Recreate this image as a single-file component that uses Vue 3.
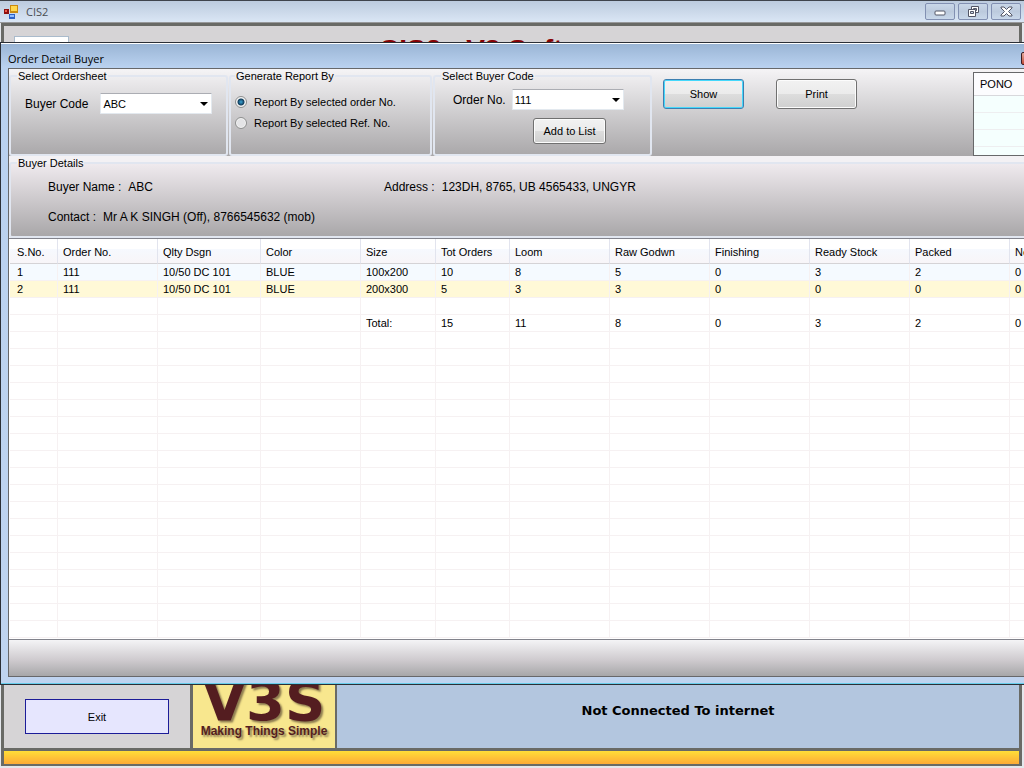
<template>
  <div class="app">
    <header class="titlebar">
      <svg class="app-icon" viewBox="0 0 14 14" width="14" height="14" aria-hidden="true">
        <rect x="6" y="0" width="8" height="8" fill="#c98a10" />
        <rect x="7" y="1" width="6" height="5" fill="#ffd84d" />
        <rect x="0" y="4" width="5" height="5" fill="#8e1010" />
        <rect x="1" y="5" width="2" height="2" fill="#ee5a4a" />
        <rect x="5" y="9" width="6" height="5" fill="#2f62c4" />
        <rect x="6" y="10" width="4" height="2" fill="#8fbcff" />
      </svg>
      <span class="app-name">CIS2</span>
      <div class="win-buttons">
        <button type="button" aria-label="Minimize">
          <svg viewBox="0 0 13 11" width="13" height="11">
            <rect x="1" y="5" width="10" height="4" rx="1" fill="#fff" stroke="#535666" />
          </svg>
        </button>
        <button type="button" aria-label="Restore">
          <svg viewBox="0 0 13 11" width="13" height="11">
            <path d="M4.500 0.500h7v6h-7z" fill="#fff" stroke="#535666" />
            <path d="M6.500 2.500h3v2h-3z" fill="#c9d7e8" stroke="#535666" />
            <path d="M1.500 3.500h7v7h-7z" fill="#fff" stroke="#535666" />
            <path d="M3.500 5.500h3v2h-3z" fill="#c9d7e8" stroke="#535666" />
          </svg>
        </button>
        <button type="button" aria-label="Close">
          <svg viewBox="0 0 13 11" width="13" height="11">
            <path d="M1 1h3l2.500 2.500L9 1h3v1L8.500 5.500 12 9v1H9L6.500 7.500 4 10H1V9l3.500-3.500L1 2z" fill="#fff" stroke="#535666" />
          </svg>
        </button>
      </div>
    </header>

    <main class="desktop">
      <section class="banner">
        <input class="banner-input" type="text" aria-label="Search" />
        <h1>CIS2 - V3 Soft</h1>
      </section>

      <footer class="status">
        <div class="status-exit">
          <button type="button" class="exit">Exit</button>
        </div>
        <div class="logo">
          <span class="logo-mark">V3S</span>
          <span class="logo-text">Making Things Simple</span>
        </div>
        <p class="connection">Not Connected To internet</p>
      </footer>
      <div class="strip"></div>
    </main>

    <!-- Child window floating over the main form -->
    <section class="child">
      <header class="child-title">
        <h2>Order Detail Buyer</h2>
        <button type="button" class="child-close" aria-label="Close order detail"></button>
      </header>

      <div class="child-body">
        <div class="filters">
          <fieldset class="group">
            <legend>Select Ordersheet</legend>
            <div class="field field-buyer">
              <label for="buyer">Buyer Code</label>
              <span class="combo">
                <select id="buyer" v-model="buyer">
                  <option>ABC</option>
                </select>
              </span>
            </div>
          </fieldset>

          <fieldset class="group group-report">
            <legend>Generate Report By</legend>
            <label v-for="option in reportOptions" :key="option.value" class="radio">
              <input v-model="reportBy" type="radio" name="report" :value="option.value" />
              {{ option.label }}
            </label>
          </fieldset>

          <fieldset class="group">
            <legend>Select Buyer Code</legend>
            <div class="field field-order">
              <label for="order">Order No.</label>
              <span class="combo">
                <select id="order" v-model="orderNo">
                  <option>111</option>
                </select>
              </span>
            </div>
            <button type="button" class="btn btn-add">Add to List</button>
          </fieldset>

          <div class="actions">
            <button type="button" class="btn btn-default">Show</button>
            <button type="button" class="btn">Print</button>
          </div>

          <div class="pono">
            <table>
              <thead>
                <tr><th>PONO</th></tr>
              </thead>
              <tbody>
                <tr v-for="n in 4" :key="n"><td></td></tr>
              </tbody>
            </table>
          </div>
        </div>

        <fieldset class="group details">
          <legend>Buyer Details</legend>
          <dl>
            <div><dt>Buyer Name :</dt><dd>ABC</dd></div>
            <div><dt>Address :</dt><dd>123DH, 8765, UB 4565433, UNGYR</dd></div>
            <div><dt>Contact :</dt><dd>Mr A K SINGH (Off), 8766545632 (mob)</dd></div>
          </dl>
        </fieldset>

        <div class="grid">
          <table class="orders">
            <colgroup>
              <col v-for="col in columns" :key="col.label" :style="{ width: col.width + 'px' }" />
            </colgroup>
            <thead>
              <tr>
                <th v-for="col in columns" :key="col.label">{{ col.label }}</th>
              </tr>
            </thead>
            <tbody>
              <tr v-for="(row, i) in rows" :key="i">
                <td v-for="(cell, j) in row" :key="j">{{ cell }}</td>
              </tr>
            </tbody>
          </table>
        </div>

        <div class="child-footer"></div>
      </div>
    </section>
  </div>
</template>

<script setup>
import { ref } from 'vue'

const buyer = ref('ABC')
const orderNo = ref('111')
const reportBy = ref('order')

const reportOptions = [
  { value: 'order', label: 'Report By selected order No.' },
  { value: 'ref', label: 'Report By selected Ref. No.' }
]

const columns = [
  { label: 'S.No.', width: 48 },
  { label: 'Order No.', width: 100 },
  { label: 'Qlty Dsgn', width: 103 },
  { label: 'Color', width: 100 },
  { label: 'Size', width: 75 },
  { label: 'Tot Orders', width: 74 },
  { label: 'Loom', width: 100 },
  { label: 'Raw Godwn', width: 100 },
  { label: 'Finishing', width: 100 },
  { label: 'Ready Stock', width: 100 },
  { label: 'Packed', width: 100 },
  { label: 'Net', width: 100 }
]

const ROW_COUNT = 22
const blank = columns.map(() => '')

const data = [
  ['1', '111', '10/50 DC 101', 'BLUE', '100x200', '10', '8', '5', '0', '3', '2', '0'],
  ['2', '111', '10/50 DC 101', 'BLUE', '200x300', '5', '3', '3', '0', '0', '0', '0'],
  blank,
  ['', '', '', '', 'Total:', '15', '11', '8', '0', '3', '2', '0']
]

// the list always shows its full set of grid lines
const rows = [...data, ...Array(ROW_COUNT - data.length).fill(blank)]
</script>

<style>
body {
  margin: 0;
}
</style>

<style scoped>
.app {
  position: relative;
  display: flex;
  flex-direction: column;
  box-sizing: border-box;
  height: 100vh;
  overflow: hidden;
  border-top: 1px solid #3f444c;
  padding: 0 2px 2px 1px;
  background: #e4e7ec;
  color: #000;
  font-family: "Liberation Sans", Arial, sans-serif;
  font-size: 11px;
}

button,
input,
select {
  font: inherit;
  color: inherit;
}

.titlebar {
  display: flex;
  align-items: center;
  height: 21px;
  margin: 0 -2px 0 -1px;
  padding: 0 3px 0 4px;
  background: linear-gradient(#bccbde, #dae6f5);
  border-bottom: 1px solid #98999b;
}

.app-name {
  margin-left: 8px;
  color: #4a4d52;
  font-family: "Open Sans", "Noto Sans", sans-serif;
  font-size: 11px;
}

.win-buttons {
  display: flex;
  gap: 3px;
  margin-left: auto;
}

.win-buttons button {
  display: flex;
  align-items: center;
  justify-content: center;
  width: 30px;
  height: 17px;
  padding: 0;
  border: 1px solid #8290b2;
  border-radius: 2px;
  background: linear-gradient(#c9d7e8, #bccadd 50%, #c9d8ea);
}

.desktop {
  flex: 1;
  display: flex;
  flex-direction: column;
  border: 3px solid #696a66;
  border-bottom-width: 2px;
}

.banner {
  flex: 1;
  display: flex;
  align-items: flex-start;
  padding: 8px 10px;
  background: #d6d4d6;
}

.banner h1 {
  margin: 0 0 0 310px;
  color: #860204;
  font-size: 28px;
  line-height: 32px;
}

.banner-input {
  box-sizing: border-box;
  width: 55px;
  height: 20px;
  margin-top: 2px;
  border: 1px solid #abc;
  background: #fff;
}

.status {
  display: flex;
  height: 63px;
  border-bottom: 3px solid #696a66;
}

.status-exit {
  display: flex;
  width: 186px;
  align-items: center;
  justify-content: center;
  background: #d6d4d6;
}

.exit {
  width: 144px;
  height: 35px;
  border: 1px solid #1c1c98;
  background: #e6e6fe;
}

.logo {
  display: flex;
  flex-direction: column;
  align-items: center;
  justify-content: flex-end;
  width: 142px;
  overflow: hidden;
  border: solid #696a66;
  border-width: 0 2px 0 3px;
  background: #f8e78e;
  color: #541d20;
  text-shadow: 2px 2px 2px #8d7c50;
}

.logo-mark {
  font-family: "DejaVu Sans", sans-serif;
  font-size: 56px;
  font-weight: bold;
  line-height: 44px;
}

.logo-text {
  padding-bottom: 9px;
  font-family: "Liberation Sans Narrow", "Liberation Sans", sans-serif;
  font-size: 12px;
  font-weight: bold;
  line-height: 16px;
  white-space: nowrap;
}

.connection {
  flex: 1;
  margin: 0;
  padding-top: 15px;
  background: #b3c6df;
  font-family: "DejaVu Sans", sans-serif;
  font-size: 13px;
  font-weight: bold;
  line-height: 22px;
  text-align: center;
}

.strip {
  height: 13px;
  background: linear-gradient(#ffde38, #fdaa36);
}

/* Child window */
.child {
  position: absolute;
  top: 41px;
  left: 0;
  right: -20px;
  border: 1px solid #2b2f36;
  background: linear-gradient(#99b4d4, #b9d1ef 24px, #bfd4f0);
  padding: 1px 7px 7px;
  box-shadow: inset 0 1px #fff, inset 0 -1px #66cdeb;
}

.child-title {
  display: flex;
  align-items: center;
  justify-content: space-between;
  height: 24px;
}

.child-title h2 {
  margin: 6px 0 0;
  font-family: "Open Sans", "Noto Sans", sans-serif;
  font-size: 11px;
  font-weight: normal;
  line-height: 16px;
}

.child-close {
  width: 15px;
  height: 13px;
  margin-top: 4px;
  padding: 0;
  border: 1px solid #3c1c25;
  border-radius: 2px;
  background: linear-gradient(#e4aa9b, #bf4b37);
}

.child-body {
  border: 1px solid #67686a;
  background: #f3f1f4;
}

.filters {
  display: flex;
  align-items: flex-start;
  height: 87px;
  background: linear-gradient(#f5f4f6, #a9a7a9);
}

.group {
  box-sizing: border-box;
  width: 219px;
  min-width: 0;
  height: 87px;
  margin: 0 1px 0 0;
  padding: 0 6px;
  border: 2px solid #e1e6f0;
  border-radius: 3px;
}

.group-report {
  width: 203px;
  padding: 0 4px;
}

.group legend {
  padding: 0 1px;
  line-height: 14px;
}

.field {
  display: flex;
  align-items: center;
  font-size: 12px;
}

.field-buyer {
  gap: 12px;
  padding: 10px 0 0 8px;
}

.field-order {
  gap: 6px;
  padding: 6px 0 0 12px;
}

.combo {
  position: relative;
  display: flex;
}

.combo::after {
  position: absolute;
  top: 9px;
  right: 4px;
  border: 4px solid transparent;
  border-top-color: #000;
  border-bottom: 0;
  content: "";
  pointer-events: none;
}

.combo select {
  box-sizing: border-box;
  width: 112px;
  height: 21px;
  padding: 0 2px;
  border: 1px solid #e3e9ef;
  border-top-color: #abadb3;
  border-radius: 1px;
  appearance: none;
  background: #fff;
  font-size: 11px;
}

.radio {
  display: flex;
  align-items: center;
  gap: 7px;
  height: 21px;
}

.radio:first-of-type {
  margin-top: 8px;
}

.radio input {
  flex: none;
  width: 12px;
  height: 12px;
  margin: 0;
  border: 1px solid #8e8f8f;
  border-radius: 50%;
  appearance: none;
  background: #e4e4e6;
  box-shadow: inset 0 0 0 1px #f4f4f4;
}

.radio input:checked {
  background: radial-gradient(circle, #3aa6d8 0, #123d5c 3px, #eee 4px);
}

.btn {
  box-sizing: border-box;
  width: 81px;
  height: 30px;
  padding: 0;
  border: 1px solid #707070;
  border-radius: 3px;
  background: linear-gradient(#f2f2f2, #ebebeb 50%, #dddddd 50%, #cfcfcf);
  box-shadow: inset 0 0 0 1px #fcfcfc;
}

.btn-default {
  border-color: #3c7fb1;
  box-shadow: inset 0 0 0 1px #45d8fb;
}

.btn-add {
  display: block;
  width: 73px;
  height: 26px;
  margin: 8px 0 0 92px;
}

.actions {
  display: flex;
  gap: 32px;
  padding: 10px 0 0 10px;
}

.pono {
  box-sizing: border-box;
  width: 62px;
  height: 84px;
  margin: 3px 0 0 auto;
  overflow: hidden;
  border: 1px solid #67686a;
  background: #f5fffe;
}

.pono table {
  width: 100%;
  border-spacing: 0;
}

.pono th {
  height: 22px;
  padding: 0 6px;
  border-bottom: 1px solid #d8d8dc;
  background: #fcfcfe;
  font-weight: normal;
  text-align: left;
}

.pono td {
  height: 16px;
  padding: 0;
  border-bottom: 1px solid #eeeef0;
}

.details {
  width: auto;
  height: 82px;
  margin: 0;
  background: linear-gradient(#efeaee, #a9a7a9);
}

.details dl {
  display: grid;
  grid-template-columns: 336px 1fr;
  row-gap: 15px;
  margin: 0;
  padding: 10px 0 0 31px;
  font-size: 12px;
  line-height: 15px;
}

.details dl div {
  display: flex;
  gap: 7px;
}

.details dd {
  margin: 0;
  white-space: nowrap;
}

.grid {
  height: 400px;
  overflow: hidden;
  padding-left: 1px;
  border: solid #82838c;
  border-width: 1px 0;
  background: #fff;
}

.orders {
  width: 100%;
  table-layout: fixed;
  border-spacing: 0;
}

.orders th,
.orders td {
  box-sizing: border-box;
  padding: 1px 0 0 5px;
  border: solid #f6f1f2;
  border-width: 0 1px 1px 0;
  text-align: left;
  white-space: nowrap;
}

.orders th {
  height: 25px;
  padding-top: 2px;
  border-right-color: #e2e4ee;
  border-bottom-color: #d5d3d6;
  background: linear-gradient(#fff 40%, #f6f9fe 42%, #f8f5f8);
  font-weight: normal;
}

.orders td {
  height: 17px;
  line-height: 15px;
}

.orders th:first-child,
.orders td:first-child {
  padding-left: 7px;
}

.orders tbody tr:nth-child(1) {
  background: #f5faff;
}

.orders tbody tr:nth-child(2) {
  background: #fff9d7;
}

.child-footer {
  height: 36px;
  background: linear-gradient(#f4f4f6, #cfcbcf 55%, #a7a7a9);
}
</style>
